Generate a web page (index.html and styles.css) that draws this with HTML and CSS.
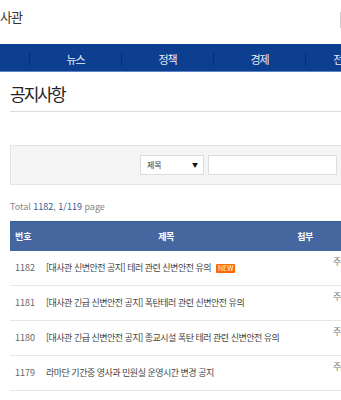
FILE: index.html
```html
<!DOCTYPE html>
<html lang="ko">
<head>
    <meta charset="UTF-8">
    <meta name="viewport" content="width=device-width, initial-scale=1.0">
    <title>공지사항</title>
    <link rel="stylesheet" href="styles.css">
</head>
<body>
    <div class="page">
        <header class="top">
            <div class="site-name">사관</div>
            <div class="top-search"></div>
        </header>

        <nav class="gnb">
            <ul>
                <li>대사관</li>
                <li>뉴스</li>
                <li>정책</li>
                <li>경제</li>
                <li>전자민원</li>
            </ul>
        </nav>

        <div class="content">
            <h2 class="page-title">공지사항</h2>

            <div class="search-box">
                <div class="search-select">제목 <span class="arrow">▼</span></div>
                <div class="search-input"></div>
                <div class="search-btn"></div>
            </div>

            <p class="total">Total <b>1182</b>, <b>1/119</b> page</p>

            <table class="board">
                <thead>
                    <tr>
                        <th class="col-no">번호</th>
                        <th class="col-title">제목</th>
                        <th class="col-file">첨부</th>
                        <th class="col-writer">작성자</th>
                    </tr>
                </thead>
                <tbody>
                    <tr>
                        <td class="col-no">1182</td>
                        <td class="col-title">[대사관 신변안전 공지] 테러 관련 신변안전 유의 <span class="new">NEW</span></td>
                        <td class="col-file"></td>
                        <td class="col-writer">주바레인 대사관</td>
                    </tr>
                    <tr>
                        <td class="col-no">1181</td>
                        <td class="col-title">[대사관 긴급 신변안전 공지] 폭탄테러 관련 신변안전 유의</td>
                        <td class="col-file"></td>
                        <td class="col-writer">주바레인 대사관</td>
                    </tr>
                    <tr>
                        <td class="col-no">1180</td>
                        <td class="col-title">[대사관 긴급 신변안전 공지] 종교시설 폭탄 테러 관련 신변안전 유의</td>
                        <td class="col-file"></td>
                        <td class="col-writer">주바레인 대사관</td>
                    </tr>
                    <tr>
                        <td class="col-no">1179</td>
                        <td class="col-title">라마단 기간중 영사과 민원실 운영시간 변경 공지</td>
                        <td class="col-file"></td>
                        <td class="col-writer">주바레인 대사관</td>
                    </tr>
                </tbody>
            </table>
        </div>
    </div>
</body>
</html>
```

FILE: styles.css
```css
html, body {
    margin: 0;
    padding: 0;
    overflow: hidden;
    background: #fff;
}
body {
    font-family: "Noto Sans CJK KR", "Noto Sans", sans-serif;
    color: #555;
}
.page {
    width: 640px;
}

/* top bar */
.top {
    display: flex;
    height: 44px;
    align-items: flex-start;
}
.site-name {
    flex: 0 0 340px;
    font-size: 13px;
    color: #333;
    line-height: 18px;
    padding-top: 8px;
    letter-spacing: -1px;
}
.top-search {
    margin-top: 12px;
    width: 160px;
    height: 14px;
    border: 1px solid #ccc;
}

/* main menu */
.gnb {
    background: #0d3f91;
    height: 27px;
    border-bottom: 1px solid #5a82c4;
}
.gnb ul {
    display: flex;
    margin: 0 0 0 -62px;
    padding: 0;
    list-style: none;
}
.gnb li {
    flex: 0 0 91px;
    margin-top: 8px;
    height: 14px;
    line-height: 14px;
    border-left: 1px solid #0a2f6c;
    text-align: center;
    color: #e8eef8;
    font-size: 11px;
    letter-spacing: -1px;
}
.gnb li:first-child { border-left: none; }

/* content */
.content {
    padding: 0 0 0 10px;
}
.page-title {
    margin: 0;
    padding: 11px 0 6px;
    font-size: 17px;
    line-height: 22px;
    font-weight: normal;
    color: #222;
    letter-spacing: -2px;
    border-bottom: 1px solid #ddd;
}

.search-box {
    margin-top: 33px;
    height: 38px;
    background: #f5f5f5;
    border: 1px solid #e4e4e4;
    display: flex;
    align-items: center;
    padding-left: 129px;
    gap: 4px;
}
.search-select {
    box-sizing: border-box;
    width: 64px;
    height: 20px;
    background: #fff;
    border: 1px solid #ddd;
    font-size: 8px;
    line-height: 18px;
    color: #333;
    padding-left: 6px;
    position: relative;
}
.search-select .arrow {
    position: absolute;
    right: 5px;
    top: 0;
    font-size: 6px;
    color: #111;
}
.search-input {
    box-sizing: border-box;
    width: 129px;
    height: 20px;
    background: #fff;
    border: 1px solid #ddd;
}
.search-btn {
    box-sizing: border-box;
    width: 40px;
    height: 20px;
    background: #fff;
    border: 1px solid #ddd;
}

.total {
    margin: 14px 0 0;
    font-size: 9px;
    line-height: 16px;
    color: #888;
}
.total b {
    font-weight: normal;
    color: #2f5596;
}

/* board */
.board {
    margin-top: 6px;
    border-collapse: collapse;
    table-layout: fixed;
    width: 408px;
}
.board th {
    background: #45669f;
    color: #fff;
    font-size: 9px;
    font-weight: bold;
    height: 29px;
    padding: 0;
    letter-spacing: -0.5px;
    border-top: 1px solid #3a5a92;
}
.board td {
    height: 34px;
    padding: 0;
    font-size: 9px;
    line-height: 14px;
    color: #444;
    border-bottom: 1px solid #e6e6e6;
    letter-spacing: -0.5px;
}
.board .col-no {
    width: 25px;
    text-align: left;
    padding-left: 5px;
    letter-spacing: 0;
}
.board td.col-no { color: #666; }
.board .col-title {
    width: 246px;
    text-align: left;
    padding-left: 6px;
}
.board th.col-title { text-align: center; padding-left: 0; width: 252px; }
.board .col-file {
    width: 26px;
    text-align: center;
}
.board th.col-writer {
    width: 100px;
    text-align: center;
}
.board td.col-writer {
    padding-left: 15px;
    text-align: left;
    white-space: nowrap;
    vertical-align: top;
    padding-top: 4px;
    height: 30px;
    color: #777;
}
.new {
    display: inline-block;
    background: #ff6a00;
    color: #fff;
    font-size: 7px;
    line-height: 9px;
    padding: 0 2px;
    margin-left: 3px;
    letter-spacing: 0;
    border-radius: 1px;
}
```
